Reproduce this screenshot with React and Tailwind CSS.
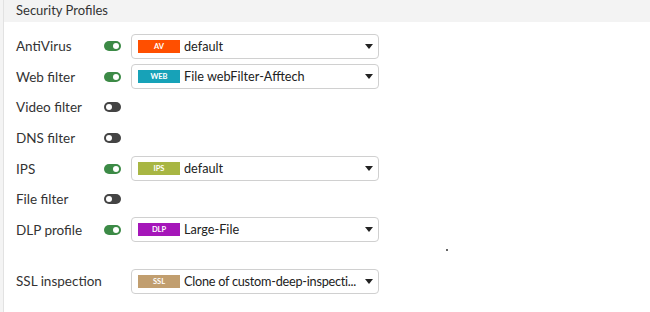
const rows = [
  { label: 'AntiVirus', on: true, badge: 'AV', color: 'bg-[#ff4f00]', value: 'default' },
  { label: 'Web filter', on: true, badge: 'WEB', color: 'bg-[#17a2b8]', value: 'File webFilter-Afftech' },
  { label: 'Video filter', on: false },
  { label: 'DNS filter', on: false },
  { label: 'IPS', on: true, badge: 'IPS', color: 'bg-[#a8b643]', value: 'default' },
  { label: 'File filter', on: false },
  { label: 'DLP profile', on: true, badge: 'DLP', color: 'bg-[#a516b9]', value: 'Large-File' },
]

const Toggle = ({ on }) => (
  <div className={`w-[17px] h-[10px] rounded-full relative ${on ? 'bg-[#3c8a46]' : 'bg-[#444]'}`}>
    <div className={`absolute top-[2px] w-[6px] h-[6px] rounded-full bg-white ${on ? 'right-[2px]' : 'left-[2px]'}`} />
  </div>
)

const Select = ({ badge, color, value, tight }) => (
  <div className="w-[248px] h-[25px] border border-[#d0d0d0] rounded-[4px] flex items-center pl-[6px] pr-[5px] bg-white">
    <span className={`${color} w-[42px] h-[13px] flex items-center justify-center text-white text-[7.5px] font-bold shrink-0`}>
      {badge}
    </span>
    <span className={`ml-[4px] text-[12.7px] text-[#222] whitespace-nowrap flex-1 ${tight ? 'tracking-[-0.25px]' : ''}`}>{value}</span>
    <svg width="8" height="5" viewBox="0 0 8 5" className="ml-[2px] shrink-0">
      <path d="M0 0h8L4 5z" fill="#222" />
    </svg>
  </div>
)

export default function App() {
  return (
    <div className="w-[650px] h-[312px] bg-white flex" style={{ fontFamily: 'Lato, "Open Sans", sans-serif' }}>
      <div className="w-[4px] bg-[#f4f4f4] border-r border-[#e2e2e2]" />
      <div className="flex-1 flex flex-col">
        <div className="h-[22px] bg-[#f3f3f3] flex items-center pl-[12px] text-[13px] text-[#333]">
          Security Profiles
        </div>
        <div className="flex flex-col pt-[9px]">
          {rows.map(r => (
            <div key={r.label} className="h-[30.6px] flex items-center">
              <span className="w-[100px] pl-[12px] text-[13.5px] text-[#333]">{r.label}</span>
              <Toggle on={r.on} />
              {r.badge && (
                <div className="ml-[10px]">
                  <Select badge={r.badge} color={r.color} value={r.value} />
                </div>
              )}
            </div>
          ))}
          <div className="h-[21px] relative">
            <div className="absolute left-[442px] top-[4px] w-[2px] h-[2px] bg-[#666]" />
          </div>
          <div className="h-[30.6px] flex items-center">
            <span className="w-[127px] pl-[12px] text-[13.5px] text-[#333]">SSL inspection</span>
            <Select badge="SSL" color="bg-[#c19e6f]" value="Clone of custom-deep-inspecti..." tight />
          </div>
        </div>
      </div>
    </div>
  )
}
